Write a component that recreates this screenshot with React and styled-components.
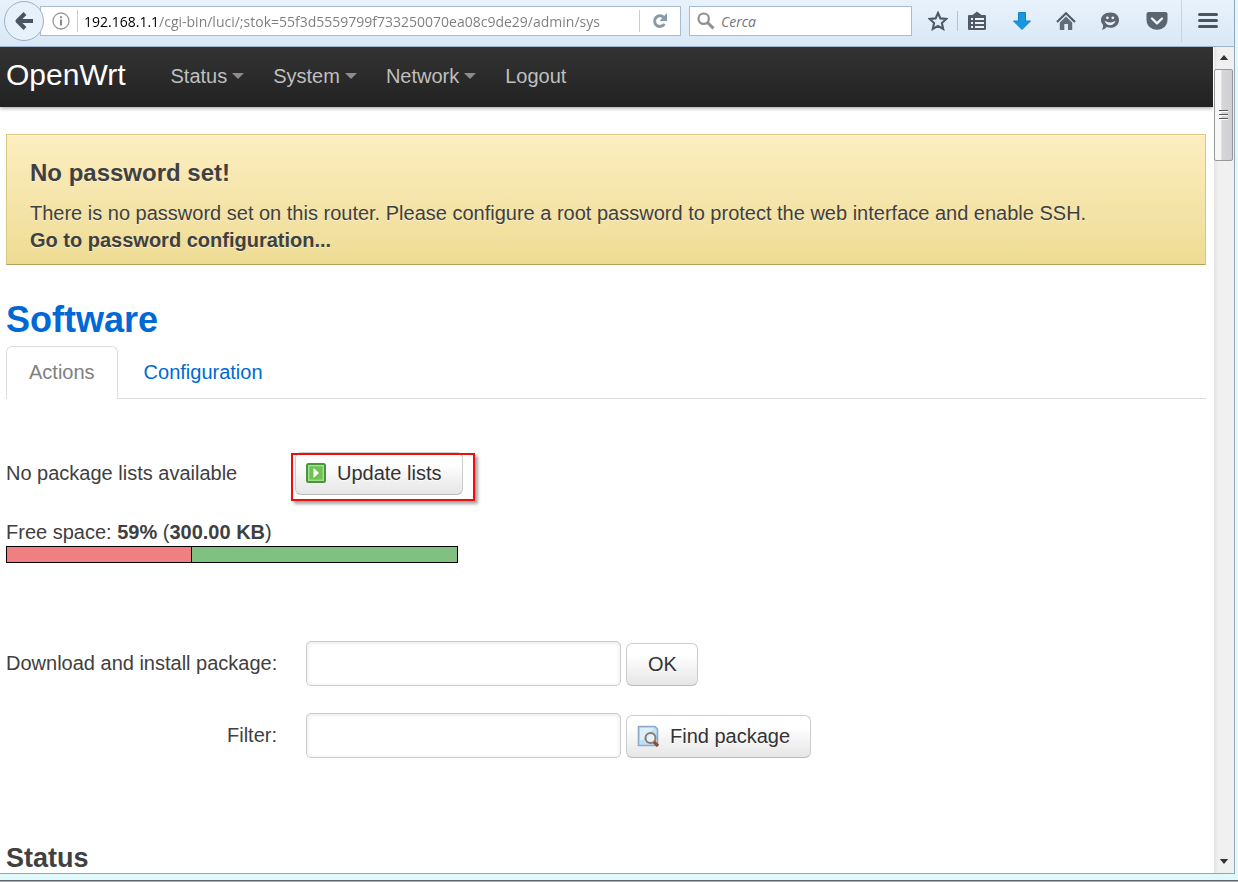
import React, { useState } from "react";
import styled, { createGlobalStyle } from "styled-components";

const FREE_PERCENT = 59;

export default function App() {
	const [url, setUrl] = useState(
		"192.168.1.1/cgi-bin/luci/;stok=55f3d5559799f733250070ea08c9de29/admin/sys"
	);

	return (
		<Desktop>
			<GlobalStyle />
			<Window>
				<Toolbar>
					<BackButton aria-label="Back">
						<BackIcon />
					</BackButton>
					<UrlBar>
						<InfoButton aria-label="Site information">
							<InfoIcon />
						</InfoButton>
						<UrlInput
							aria-label="Address"
							value={url}
							onChange={(e) => setUrl(e.target.value)}
						/>
						<ReloadButton aria-label="Reload">
							<ReloadIcon />
						</ReloadButton>
					</UrlBar>
					<SearchBar>
						<SearchIcon />
						<SearchInput aria-label="Search" placeholder="Cerca" />
					</SearchBar>
					<Tools>
						<ToolButton $width={38} aria-label="Bookmark">
							<StarIcon />
						</ToolButton>
						<ShortRule />
						<ToolButton $width={38} aria-label="Bookmarks list">
							<ListIcon />
						</ToolButton>
						<WideTools>
							<ToolButton $width={44} aria-label="Downloads">
								<DownloadIcon />
							</ToolButton>
							<ToolButton $width={44} aria-label="Home">
								<HomeIcon />
							</ToolButton>
							<ToolButton $width={44} aria-label="Chat">
								<ChatIcon />
							</ToolButton>
							<ToolButton $width={49} aria-label="Pocket">
								<PocketIcon />
							</ToolButton>
						</WideTools>
						<MenuButton $width={53} aria-label="Menu">
							<MenuIcon />
						</MenuButton>
					</Tools>
				</Toolbar>
				<Viewport>
					<Page>
						<Navbar>
							<Brand href="#">OpenWrt</Brand>
							<NavLink href="#status">
								Status
								<Caret />
							</NavLink>
							<NavLink href="#system">
								System
								<Caret />
							</NavLink>
							<NavLink href="#network">
								Network
								<Caret />
							</NavLink>
							<NavLink href="#logout">Logout</NavLink>
						</Navbar>
						<Main>
							<Alert>
								<AlertTitle>No password set!</AlertTitle>
								<AlertText>
									There is no password set on this router. Please configure a
									root password to protect the web interface and enable SSH.
								</AlertText>
								<AlertLink href="#password">
									Go to password configuration...
								</AlertLink>
							</Alert>
							<Title>Software</Title>
							<Tabs>
								<Tab href="#actions" $active>
									Actions
								</Tab>
								<Tab href="#configuration">Configuration</Tab>
							</Tabs>
							<ListsRow>
								<ListsText>No package lists available</ListsText>
								<Highlighted>
									<Button $icon>
										<RunIcon />
										Update lists
									</Button>
									<Highlight />
								</Highlighted>
							</ListsRow>
							<FreeSpace>
								Free space: <strong>{FREE_PERCENT}%</strong> (
								<strong>300.00 KB</strong>)
							</FreeSpace>
							<Meter>
								<MeterUsed style={{ width: `${100 - FREE_PERCENT}%` }} />
							</Meter>
							<Form onSubmit={(e) => e.preventDefault()}>
								<Field>
									<Label htmlFor="url">Download and install package:</Label>
									<TextInput id="url" />
									<Button>OK</Button>
								</Field>
								<Field>
									<Label htmlFor="query">Filter:</Label>
									<TextInput id="query" />
									<Button $icon>
										<FindIcon />
										Find package
									</Button>
								</Field>
							</Form>
							<Subtitle>Status</Subtitle>
						</Main>
					</Page>
					<Scrollbar>
						<ScrollArrow viewBox="0 0 10 6">
							<path d="M0 6L5 0L10 6Z" fill="#333" />
						</ScrollArrow>
						<Thumb>
							<Grip />
							<Grip />
							<Grip />
						</Thumb>
						<Track />
						<ScrollArrow viewBox="0 0 10 6">
							<path d="M0 0L5 6L10 0Z" fill="#333" />
						</ScrollArrow>
					</Scrollbar>
				</Viewport>
			</Window>
			<Taskline />
		</Desktop>
	);
}

const BackIcon = () => (
	<svg width="20" height="20" viewBox="0 0 20 20">
		<path
			d="M11 2.5L3.5 10L11 17.5M4 10H19"
			fill="none"
			stroke="#4a5561"
			strokeWidth="4"
			strokeLinejoin="round"
		/>
	</svg>
);

const InfoIcon = () => (
	<svg width="18" height="18" viewBox="0 0 18 18">
		<circle cx="9" cy="9" r="8" fill="none" stroke="#979797" strokeWidth="1.3" />
		<path d="M9 7.5V13.5M9 4.2V6.2" stroke="#8d8d8d" strokeWidth="2.2" />
	</svg>
);

const ReloadIcon = () => (
	<svg width="16" height="16" viewBox="0 0 16 16">
		<path
			d="M11.5 4.2A5.3 5.3 0 1 0 12.4 11"
			fill="none"
			stroke="#8a9aa7"
			strokeWidth="3"
		/>
		<path d="M15 0V8H7.5Z" fill="#8a9aa7" />
	</svg>
);

const SearchIcon = () => (
	<svg width="18" height="18" viewBox="0 0 18 18">
		<circle cx="6.7" cy="6.7" r="5.2" fill="none" stroke="#8f8f8f" strokeWidth="2.2" />
		<path d="M10.5 10.5L16.5 16.5" stroke="#8f8f8f" strokeWidth="3" />
	</svg>
);

const StarIcon = () => (
	<svg width="20" height="20" viewBox="0 0 20 20">
		<path
			d="M10 2L12.4 7.4L18.3 8L13.9 12L15.2 18L10 14.9L4.8 18L6.1 12L1.7 8L7.6 7.4Z"
			fill="none"
			stroke="#4f5a66"
			strokeWidth="2.1"
		/>
	</svg>
);

const ListIcon = () => (
	<svg width="20" height="20" viewBox="0 0 20 20">
		<path
			d="M2 4H5.5L10 0.5L14.5 4H18Q19 4 19 5V18Q19 19 18 19H2Q1 19 1 18V5Q1 4 2 4Z"
			fill="#505b66"
		/>
		<path
			d="M4 8H6M8 8H17M4 12H6M8 12H17M4 16H6M8 16H17"
			stroke="#eaf3fb"
			strokeWidth="2.2"
		/>
	</svg>
);

const DownloadIcon = () => (
	<svg width="18" height="18" viewBox="0 0 18 18">
		<path d="M5.5 0.5H12.5V9H17.5L9 17.5L0.5 9H5.5Z" fill="#1896e2" stroke="#1580c8" />
	</svg>
);

const HomeIcon = () => (
	<svg width="20" height="20" viewBox="0 0 20 20">
		<path
			d="M1 11L10 2.2L19 11"
			fill="none"
			stroke="#505b66"
			strokeWidth="2.1"
		/>
		<path d="M3.8 11.5L10 5.4L16.2 11.5V19H12V13H8.3V19H3.8Z" fill="#626d78" />
	</svg>
);

const ChatIcon = () => (
	<svg width="20" height="18" viewBox="0 0 20 18">
		<path
			d="M10.5 0.5C16 0.5 19 4 19 8C19 12.5 15.5 15.8 10.5 15.8C9 15.8 7.6 15.5 6.5 15C5.3 16.8 3.5 17.6 1.8 17.6C2.9 16.4 3.3 15 3 12.8C1.7 11.5 1 10 1 8C1 4 4.5 0.5 10.5 0.5Z"
			fill="#5c6772"
		/>
		<circle cx="7.4" cy="5.8" r="1.4" fill="#e6f0fa" />
		<circle cx="12.8" cy="5.8" r="1.4" fill="#e6f0fa" />
		<path
			d="M4.6 8.8Q10 12 15.6 8.8Q14 13.2 10 13.2Q6 13.2 4.6 8.8Z"
			fill="#e6f0fa"
		/>
	</svg>
);

const PocketIcon = () => (
	<svg width="22" height="20" viewBox="0 0 22 20">
		<path
			d="M2.5 1H19.5Q21.5 1 21.5 3V8.5C21.5 14.5 17 18.8 11 18.8C5 18.8 0.5 14.5 0.5 8.5V3Q0.5 1 2.5 1Z"
			fill="#5a6570"
		/>
		<path
			d="M6 7.5L11 12.3L16 7.5"
			fill="none"
			stroke="#eef5fc"
			strokeWidth="2.4"
			strokeLinecap="round"
			strokeLinejoin="round"
		/>
	</svg>
);

const MenuIcon = () => (
	<svg width="20" height="18" viewBox="0 0 20 18">
		<path
			d="M1.5 2.5H18.5M1.5 8.5H18.5M1.5 14.5H18.5"
			stroke="#4a545e"
			strokeWidth="3"
			strokeLinecap="round"
		/>
	</svg>
);

const RunIcon = () => (
	<svg width="20" height="20" viewBox="0 0 20 20">
		<rect x="1" y="1" width="18" height="18" rx="1.5" fill="#6cc551" stroke="#4a9440" strokeWidth="2" />
		<rect x="2.7" y="2.7" width="14.6" height="14.6" fill="none" stroke="#a5df92" strokeWidth="1.4" />
		<path d="M7.5 5L13 10L7.5 15Z" fill="#fff" />
	</svg>
);

const FindIcon = () => (
	<svg width="22" height="22" viewBox="0 0 22 22">
		<path d="M1.5 1.5H18L20.5 4V20.5H1.5Z" fill="#bfe0f6" stroke="#8eabc9" strokeWidth="1.6" />
		<path d="M3 3H17L6 15H3Z" fill="#dceffb" />
		<circle cx="13.5" cy="13" r="5" fill="#e4f1f9" stroke="#8d796c" strokeWidth="2" />
		<path d="M17 17L21 21" stroke="#8a4f34" strokeWidth="3.2" />
	</svg>
);

const GlobalStyle = createGlobalStyle`
	* {
		box-sizing: border-box;
	}

	body {
		margin: 0;
		color: #404040;
		font-family: "Liberation Sans", Arial, sans-serif;
		font-size: 20px;
		line-height: 27px;
	}

	button,
	input {
		font: inherit;
		margin: 0;
		padding: 0;
	}

	a {
		text-decoration: none;
	}

	svg {
		display: block;
		flex: none;
	}
`;

const Desktop = styled.div`
	background: #e0fafc;
	display: flex;
	flex-direction: column;
	height: 100vh;
	overflow: hidden;
`;

const Window = styled.div`
	border-bottom: 1px solid #8fa9af;
	border-right: 1px solid #8fa9b8;
	display: flex;
	flex: 1;
	flex-direction: column;
	margin-right: 3px;
	min-height: 0;
`;

const Taskline = styled.div`
	border-bottom: 1px solid #a9a9a9;
	box-shadow: inset 0 -1px #5d696d;
	height: 8px;
`;

const Toolbar = styled.div`
	align-items: center;
	background: linear-gradient(#e8f2fc, #d9e8f6);
	border-bottom: 1px solid #9fb6cf;
	display: flex;
	height: 47px;
	padding: 0 0 4px 4px;
`;

const IconButton = styled.button`
	align-items: center;
	background: none;
	border: 0;
	display: flex;
	justify-content: center;
`;

const BackButton = styled(IconButton)`
	background: #e7f1fb;
	border: 1px solid #9cb0c2;
	border-radius: 50%;
	height: 40px;
	width: 40px;
	z-index: 1;
`;

const UrlBar = styled.div`
	background: #fff;
	border: 1px solid #a9bccd;
	display: flex;
	flex: 1;
	font-family: "Open Sans", "Noto Sans", sans-serif;
	font-size: 14px;
	height: 30px;
	margin: 0 8px 0 -4px;
	padding: 3px 0;
`;

const InfoButton = styled(IconButton)`
	border-right: 1px solid #c8cdd2;
	padding-left: 4px;
	width: 37px;
`;

/* the host part of the address is darker than the path */
const UrlInput = styled.input`
	background: linear-gradient(to right, #000 74px, #7c7c7c 74px);
	background-clip: text;
	border: 0;
	color: transparent;
	flex: 1;
	margin: 0 31px 0 6px;
	min-width: 0;
	outline: 0;
`;

const ReloadButton = styled(IconButton)`
	border-left: 1px solid #c8cdd2;
	width: 41px;
`;

const SearchBar = styled.div`
	align-items: center;
	background: #fff;
	border: 1px solid #a9bccd;
	display: flex;
	gap: 6px;
	height: 30px;
	padding: 0 7px;
	width: 223px;
`;

const SearchInput = styled.input`
	border: 0;
	flex: 1;
	font-family: "Open Sans", "Noto Sans", sans-serif;
	font-size: 14px;
	min-width: 0;
	outline: 0;

	&::placeholder {
		color: #757575;
		font-style: italic;
	}
`;

const Tools = styled.div`
	align-items: center;
	display: flex;
	margin-left: 7px;
`;

const WideTools = styled.div`
	display: flex;
	margin-left: 4px;
`;

const ToolButton = styled(IconButton)`
	height: 42px;
	width: ${(p) => p.$width}px;
`;

const MenuButton = styled(ToolButton)`
	border-left: 1px solid #c3d3e3;
`;

const ShortRule = styled.div`
	background: #b5c3d0;
	height: 20px;
	width: 1px;
`;

const Viewport = styled.div`
	background: #fff;
	display: flex;
	flex: 1;
	min-height: 0;
`;

const Page = styled.div`
	flex: 1;
	overflow: hidden;
`;

const Navbar = styled.nav`
	align-items: center;
	background: linear-gradient(#333, #222);
	box-shadow: 0 1px 4px rgba(0, 0, 0, 0.4);
	display: flex;
	gap: 29px;
	height: 60px;
	padding: 0 6px 2px;
`;

const Brand = styled.a`
	color: #fff;
	font-size: 30px;
	margin-right: 16px;
	padding-bottom: 3px;
`;

const NavLink = styled.a`
	align-items: center;
	color: #bfbfbf;
	display: flex;
	gap: 5px;
`;

const Caret = styled.span`
	border: 6px solid transparent;
	border-bottom: 0;
	border-top-color: #8c8c8c;
`;

const Main = styled.main`
	padding: 27px 7px 0 6px;
`;

const Alert = styled.section`
	background: linear-gradient(#fceec1, #eedc94);
	border: 1px solid #d9c77c;
	border-bottom-color: #b5a15a;
	box-shadow: inset 0 1px 0 rgba(255, 255, 255, 0.4);
	padding: 11px 23px 10px;
	text-shadow: 0 1px 0 rgba(255, 255, 255, 0.5);
`;

const AlertTitle = styled.h4`
	font-size: 24px;
	line-height: 54px;
	margin: 0;
`;

const AlertText = styled.p`
	margin: 0;
`;

const AlertLink = styled.a`
	color: #404040;
	display: block;
	font-weight: bold;
`;

const Title = styled.h2`
	color: #0069d6;
	font-size: 36px;
	line-height: 52px;
	margin: 29px 0 0;
`;

const Tabs = styled.div`
	border-bottom: 1px solid #ddd;
	display: flex;
	gap: 3px;
	height: 53px;
`;

const Tab = styled.a`
	background: #fff;
	border: 1px solid ${(p) => (p.$active ? "#ddd" : "transparent")};
	border-bottom: 0;
	border-radius: 6px 6px 0 0;
	color: ${(p) => (p.$active ? "#808080" : "#0069d6")};
	height: ${(p) => (p.$active ? 53 : 52)}px;
	line-height: 50px;
	padding: 0 22px;
`;

const ListsRow = styled.div`
	align-items: center;
	display: flex;
	margin-top: 53px;
`;

const ListsText = styled.div`
	width: 289px;
`;

const Highlighted = styled.div`
	position: relative;
`;

const Highlight = styled.div`
	border: 2px solid #f20d0d;
	bottom: -6px;
	box-shadow: 3px 3px 3px rgba(0, 0, 0, 0.35);
	left: -4px;
	pointer-events: none;
	position: absolute;
	right: -12px;
	top: 1px;
`;

const Button = styled.button`
	align-items: center;
	background: linear-gradient(#fff, #fff 25%, #e6e6e6);
	border: 1px solid #ccc;
	border-bottom-color: #bbb;
	border-radius: 6px;
	color: #333;
	display: flex;
	gap: 11px;
	height: 43px;
	padding: 0 20px 1px ${(p) => (p.$icon ? 10 : 21)}px;
	text-shadow: 0 1px 1px rgba(255, 255, 255, 0.75);
	white-space: nowrap;
`;

const FreeSpace = styled.div`
	margin-top: 24px;
`;

const Meter = styled.div`
	background: #80c080;
	border: 1px solid #000;
	height: 17px;
	width: 452px;
`;

const MeterUsed = styled.div`
	background: #f08080;
	border-right: 1px solid #000;
	height: 100%;
`;

const Form = styled.form`
	display: grid;
	gap: 27px;
	margin-top: 78px;
`;

const Field = styled.div`
	align-items: flex-end;
	display: flex;
	gap: 5px;
`;

const Label = styled.label`
	line-height: 45px;
	margin-right: 24px;
	text-align: right;
	white-space: nowrap;
	width: 271px;
`;

const TextInput = styled.input`
	border: 1px solid #ccc;
	border-radius: 5px;
	box-shadow: inset 0 1px 4px rgba(0, 0, 0, 0.1);
	height: 45px;
	padding: 0 6px;
	width: 315px;
`;

const Subtitle = styled.h3`
	font-size: 27px;
	line-height: 40px;
	margin: 80px 0 0;
`;

const Scrollbar = styled.div`
	align-items: center;
	background: linear-gradient(to right, #e3e3e3, #f0f0f0 20%);
	display: flex;
	flex-direction: column;
	margin-left: 1px;
	padding: 8px 1px 9px 0;
	width: 20px;
`;

const ScrollArrow = styled.svg`
	height: 5px;
	width: 10px;
`;

const Thumb = styled.div`
	align-items: center;
	background: linear-gradient(to right, #f7f7f7 35%, #d6d6d9 40%, #d0d0d4);
	border: 1px solid #979797;
	border-radius: 2px;
	display: flex;
	flex-direction: column;
	gap: 2px;
	height: 92px;
	justify-content: center;
	margin-top: 9px;
	width: 19px;
`;

const Grip = styled.div`
	background: #555;
	border-bottom: 1px solid #fff;
	height: 2px;
	width: 9px;
`;

const Track = styled.div`
	flex: 1;
`;
